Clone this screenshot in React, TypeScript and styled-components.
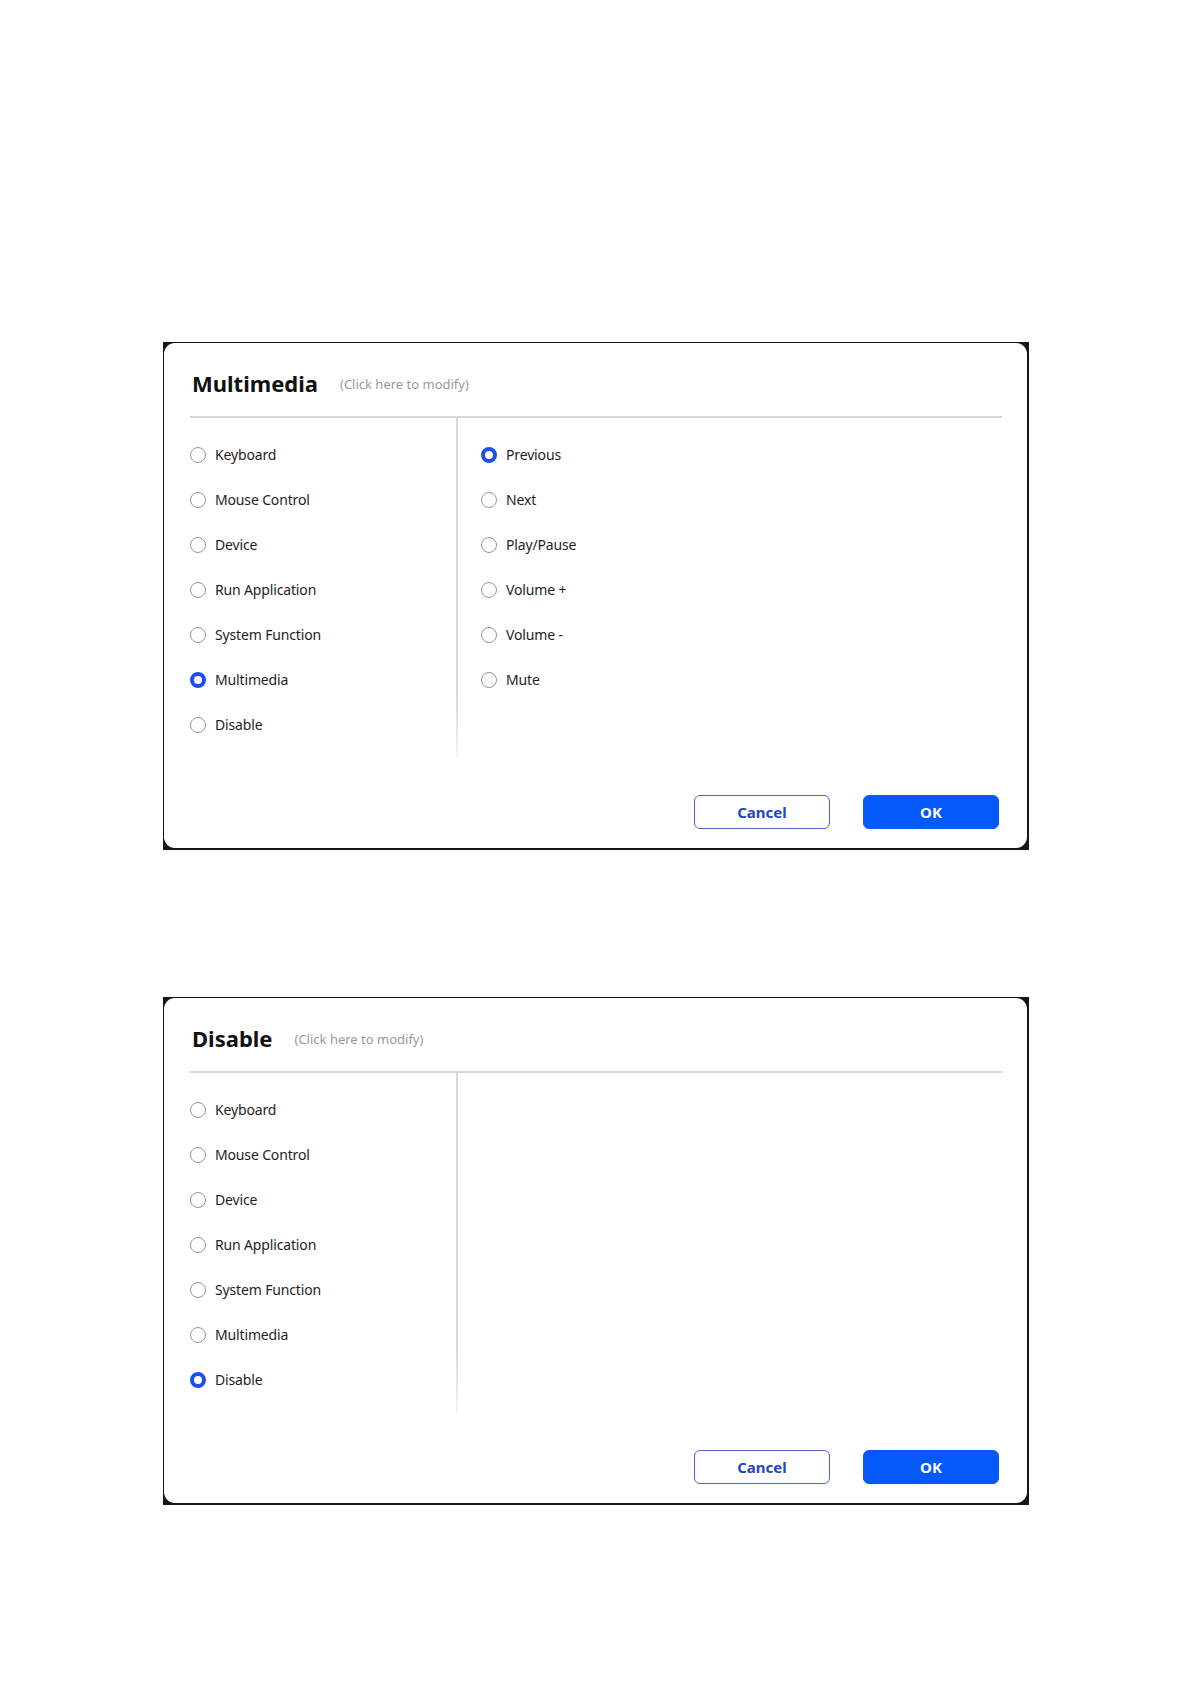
import React from "react";
import styled, { createGlobalStyle } from "styled-components";

const GlobalStyle = createGlobalStyle`
  html, body {
    margin: 0;
    padding: 0;
    background: #ffffff;
  }
  body {
    font-family: "Noto Sans", "Open Sans", "Liberation Sans", sans-serif;
    color: #222;
  }
`;

const Page = styled.div`
  display: flex;
  flex-direction: column;
  gap: 147px;
  padding: 342px 0 180px 163px;
`;

const Frame = styled.div`
  box-sizing: border-box;
  width: 866px;
  height: 508px;
  background: #151515;
  padding: 1px 2px 2px 1px;
`;

const Window = styled.div`
  box-sizing: border-box;
  height: 100%;
  background: #ffffff;
  border-radius: 11px;
  display: flex;
  flex-direction: column;
  padding: 0 25px 0 26px;
`;

const Header = styled.div`
  box-sizing: border-box;
  height: 75px;
  display: flex;
  align-items: center;
  gap: 22px;
  padding: 7px 0 0 2px;
  border-bottom: 2px solid #d6d6d6;
`;

const Title = styled.h2`
  margin: 0;
  font-size: 22px;
  font-weight: 700;
  color: #111;
`;

const Hint = styled.span`
  font-size: 13px;
  color: #9a9a9a;
  padding-top: 2px;
`;

const Body = styled.div`
  display: grid;
  grid-template-columns: 266px 1fr;
  height: 340px;
`;

const Column = styled.div<{ $divider?: boolean }>`
  display: flex;
  flex-direction: column;
  padding-top: 14px;
  padding-left: ${(p) => (p.$divider ? "23px" : "0")};
  border-left: ${(p) => (p.$divider ? "2px solid transparent" : "none")};
  border-image: ${(p) =>
    p.$divider ? "linear-gradient(#d8d8d8 80%, #f4f4f4) 1" : "none"};
`;

const Row = styled.label`
  display: flex;
  align-items: center;
  gap: 9px;
  height: 45px;
  font-size: 14px;
  letter-spacing: -0.15px;
  color: #1e1e1e;
`;

const Radio = styled.span<{ $checked?: boolean }>`
  box-sizing: border-box;
  width: 16px;
  height: 16px;
  border-radius: 50%;
  flex: none;
  background: #fff;
  border: ${(p) => (p.$checked ? "4px solid #1b4ff0" : "1.5px solid #959595")};
`;

const Footer = styled.div`
  margin-top: auto;
  display: flex;
  justify-content: flex-end;
  gap: 33px;
  padding: 0 3px 19px 0;
`;

const Button = styled.button<{ $primary?: boolean }>`
  box-sizing: border-box;
  width: 136px;
  height: 34px;
  border-radius: 6px;
  font-family: "Noto Sans", "Open Sans", sans-serif;
  font-size: 15px;
  font-weight: 700;
  line-height: 1;
  cursor: pointer;
  border: 1px solid ${(p) => (p.$primary ? "#0559fa" : "#4a68cc")};
  background: ${(p) => (p.$primary ? "#0559fa" : "#ffffff")};
  color: ${(p) => (p.$primary ? "#ffffff" : "#2347c2")};
`;

const categories = [
  "Keyboard",
  "Mouse Control",
  "Device",
  "Run Application",
  "System Function",
  "Multimedia",
  "Disable",
];

type DialogProps = {
  selected: string;
  options?: string[];
  selectedOption?: string;
};

function Dialog({ selected, options = [], selectedOption }: DialogProps) {
  return (
    <Frame>
      <Window>
        <Header>
          <Title>{selected}</Title>
          <Hint>(Click here to modify)</Hint>
        </Header>
        <Body>
          <Column>
            {categories.map((c) => (
              <Row key={c}>
                <Radio $checked={c === selected} />
                {c}
              </Row>
            ))}
          </Column>
          <Column $divider>
            {options.map((o) => (
              <Row key={o}>
                <Radio $checked={o === selectedOption} />
                {o}
              </Row>
            ))}
          </Column>
        </Body>
        <Footer>
          <Button>Cancel</Button>
          <Button $primary>OK</Button>
        </Footer>
      </Window>
    </Frame>
  );
}

export default function App() {
  return (
    <>
      <GlobalStyle />
      <Page>
        <Dialog
          selected="Multimedia"
          options={["Previous", "Next", "Play/Pause", "Volume +", "Volume -", "Mute"]}
          selectedOption="Previous"
        />
        <Dialog selected="Disable" />
      </Page>
    </>
  );
}
